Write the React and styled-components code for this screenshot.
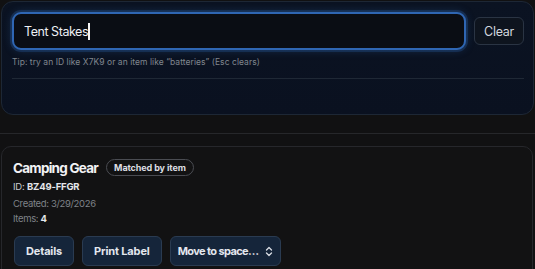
import styled, { createGlobalStyle } from "styled-components";

const GlobalStyles = createGlobalStyle`
  html, body {
    margin: 0;
    background: #111112;
    font-family: Inter, "Noto Sans", sans-serif;
    color: #e6e8ec;
  }
`;

const Page = styled.div`
  display: flex;
  flex-direction: column;
  padding: 1px 1px 0 1px;
`;

const Header = styled.div`
  padding: 0 1px 18px 1px;
  margin: 0 -1px;
  border-bottom: 1px solid #26272a;
`;

const SearchPanel = styled.div`
  height: 114px;
  box-sizing: border-box;
  border: 1px solid #1d2735;
  border-radius: 12px;
  background: linear-gradient(180deg, #0b1322 0%, #0a1120 100%);
  padding: 10px 9px 0 10px;
`;

const SearchRow = styled.div`
  display: flex;
  align-items: center;
  gap: 8px;
`;

const SearchInput = styled.div`
  flex: 1;
  height: 38px;
  box-sizing: border-box;
  display: flex;
  align-items: center;
  padding: 0 10px;
  border: 2px solid #2f66b3;
  border-radius: 9px;
  background: #0a0d14;
  box-shadow: 0 0 0 2px rgba(47, 102, 179, 0.25), 0 0 8px rgba(47, 102, 179, 0.35);
  font-size: 12.5px;
  letter-spacing: -0.45px;
  color: #eef0f4;
`;

const Caret = styled.span`
  display: inline-block;
  width: 1.5px;
  height: 17px;
  background: #f4f4f4;
`;

const ClearButton = styled.button`
  height: 28px;
  width: 50px;
  border: 1px solid #2a3443;
  border-radius: 6px;
  background: #0e141e;
  color: #d3d7de;
  font-family: inherit;
  font-size: 12.5px;
  letter-spacing: -0.3px;
  padding: 0;
`;

const Tip = styled.div`
  margin-top: 7px;
  font-size: 8.5px;
  letter-spacing: 0.05px;
  color: #80878f;
`;

const Divider = styled.div`
  margin-top: 11px;
  height: 1px;
  background: #1f2835;
`;

const Card = styled.div`
  margin-top: 12px;
  margin-right: 1px;
  border: 1px solid #26272b;
  border-radius: 10px;
  background: #121213;
  padding: 12px 11px 14px 11px;
  display: flex;
  flex-direction: column;
`;

const TitleRow = styled.div`
  display: flex;
  align-items: center;
  gap: 8px;
`;

const Title = styled.div`
  font-size: 13.5px;
  font-weight: 700;
  letter-spacing: -0.75px;
  color: #f2f3f5;
`;

const Badge = styled.span`
  display: inline-flex;
  align-items: center;
  height: 17px;
  box-sizing: border-box;
  padding: 0 7px;
  border: 1px solid #4a4c52;
  border-radius: 9px;
  font-size: 9px;
  font-weight: 700;
  letter-spacing: -0.1px;
  color: #dcdee2;
`;

const Meta = styled.div`
  font-size: 9.5px;
  line-height: 15px;
  letter-spacing: ${(p) => (p.$muted ? "-0.35px" : "-0.2px")};
  margin-top: ${(p) => p.$gap || 0}px;
  color: ${(p) => (p.$muted ? "#7f8288" : "#c9ccd2")};

  b {
    color: #e4e6ea;
    font-weight: 700;
  }
`;

const Actions = styled.div`
  display: flex;
  gap: 8px;
  margin-top: 10px;
  padding-left: 1px;
`;

const ActionButton = styled.button`
  height: 30px;
  box-sizing: border-box;
  padding: 0 ${(p) => p.$pad || 11}px;
  display: inline-flex;
  align-items: center;
  gap: 7px;
  border: 1px solid #2a3b51;
  border-radius: 6px;
  background: #15253a;
  color: #e3e7ee;
  font-family: inherit;
  font-size: 11px;
  font-weight: 700;
  letter-spacing: ${(p) => (p.$tight ? "-0.6px" : "-0.15px")};
`;

const Chevrons = () => (
  <svg width="8" height="11" viewBox="0 0 8 11" fill="none" stroke="#d9dde4" strokeWidth="1.3" strokeLinecap="round" strokeLinejoin="round">
    <path d="M1.5 4 L4 1.5 L6.5 4" />
    <path d="M1.5 7 L4 9.5 L6.5 7" />
  </svg>
);

export default function App() {
  return (
    <Page>
      <GlobalStyles />
      <Header>
        <SearchPanel>
          <SearchRow>
            <SearchInput>
              Tent Stakes
              <Caret />
            </SearchInput>
            <ClearButton>Clear</ClearButton>
          </SearchRow>
          <Tip>Tip: try an ID like X7K9 or an item like “batteries” (Esc clears)</Tip>
          <Divider />
        </SearchPanel>
      </Header>
      <Card>
        <TitleRow>
          <Title>Camping Gear</Title>
          <Badge>Matched by item</Badge>
        </TitleRow>
        <Meta $gap={3}>
          ID: <b>BZ49-FFGR</b>
        </Meta>
        <Meta $muted $gap={2}>Created: 3/29/2026</Meta>
        <Meta $muted>
          Items: <b>4</b>
        </Meta>
        <Actions>
          <ActionButton $pad={11}>Details</ActionButton>
          <ActionButton $pad={11}>Print Label</ActionButton>
          <ActionButton $pad={7} $tight>
            Move to space…
            <Chevrons />
          </ActionButton>
        </Actions>
      </Card>
    </Page>
  );
}
